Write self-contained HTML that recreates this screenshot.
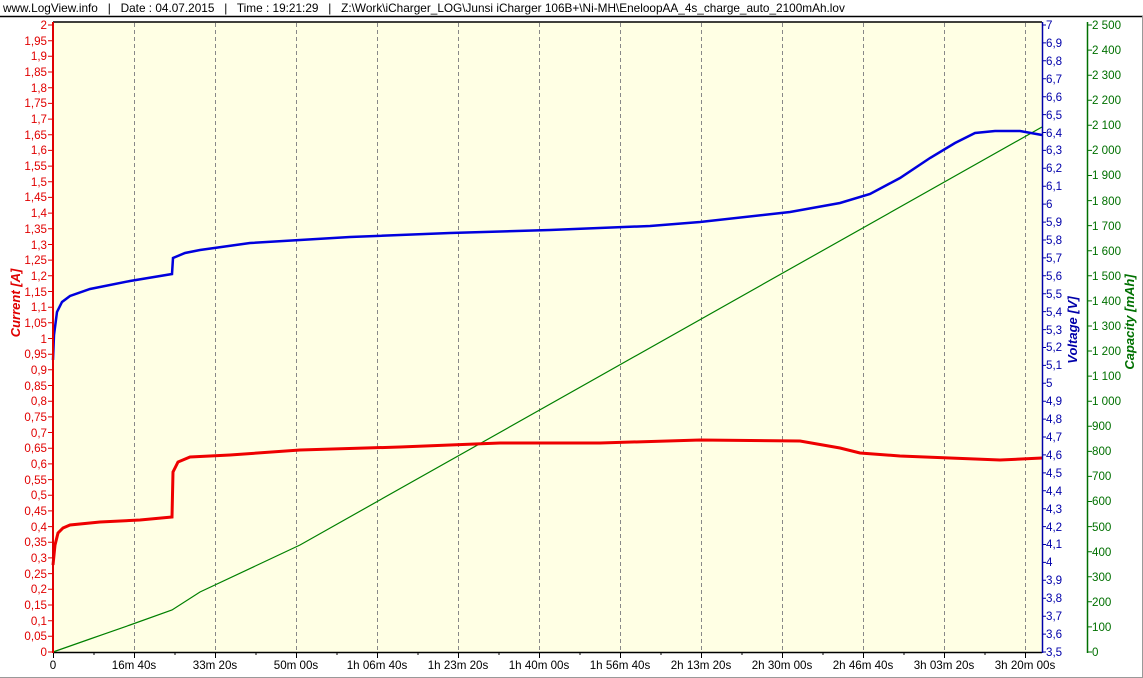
<!DOCTYPE html>
<html><head><meta charset="utf-8"><style>
html,body{margin:0;padding:0;background:#fff;width:1143px;height:678px;overflow:hidden}
svg{display:block;font-family:"Liberation Sans",sans-serif;font-size:11.6px}
</style></head><body>
<svg width="1143" height="678" viewBox="0 0 1143 678">
<rect x="0" y="0" width="1143" height="678" fill="#fff"/>
<text x="3" y="12" font-size="11.8" fill="#000" xml:space="preserve">www.LogView.info   |   Date : 04.07.2015   |   Time : 19:21:29   |   Z:\Work\iCharger_LOG\Junsi iCharger 106B+\Ni-MH\EneloopAA_4s_charge_auto_2100mAh.lov</text>
<line x1="0" y1="16.5" x2="1143" y2="16.5" stroke="#000" stroke-width="1.5"/>
<line x1="0" y1="677.5" x2="1143" y2="677.5" stroke="#999" stroke-width="1"/>
<line x1="1142.5" y1="16" x2="1142.5" y2="678" stroke="#999" stroke-width="1"/>
<rect x="53" y="22" width="989" height="630" fill="#ffffe4"/>
<line x1="53" y1="22" x2="1042" y2="22" stroke="#000" stroke-width="1.5"/>
<g stroke="#888" stroke-dasharray="4,3" stroke-width="1">
<line x1="134.5" y1="23" x2="134.5" y2="651"/><line x1="215.5" y1="23" x2="215.5" y2="651"/><line x1="296.5" y1="23" x2="296.5" y2="651"/><line x1="377.5" y1="23" x2="377.5" y2="651"/><line x1="458.5" y1="23" x2="458.5" y2="651"/><line x1="539.5" y1="23" x2="539.5" y2="651"/><line x1="620.5" y1="23" x2="620.5" y2="651"/><line x1="701.5" y1="23" x2="701.5" y2="651"/><line x1="782.5" y1="23" x2="782.5" y2="651"/><line x1="863.5" y1="23" x2="863.5" y2="651"/><line x1="944.5" y1="23" x2="944.5" y2="651"/><line x1="1025.5" y1="23" x2="1025.5" y2="651"/>
</g>
<line x1="53" y1="652.5" x2="1042" y2="652.5" stroke="#000" stroke-width="1.5"/>
<g stroke="#000"><line x1="53.5" y1="652" x2="53.5" y2="658"/><line x1="134.5" y1="652" x2="134.5" y2="658"/><line x1="215.5" y1="652" x2="215.5" y2="658"/><line x1="296.5" y1="652" x2="296.5" y2="658"/><line x1="377.5" y1="652" x2="377.5" y2="658"/><line x1="458.5" y1="652" x2="458.5" y2="658"/><line x1="539.5" y1="652" x2="539.5" y2="658"/><line x1="620.5" y1="652" x2="620.5" y2="658"/><line x1="701.5" y1="652" x2="701.5" y2="658"/><line x1="782.5" y1="652" x2="782.5" y2="658"/><line x1="863.5" y1="652" x2="863.5" y2="658"/><line x1="944.5" y1="652" x2="944.5" y2="658"/><line x1="1025.5" y1="652" x2="1025.5" y2="658"/></g>
<g stroke="#000"><path d="M94 652v3M175 652v3M256 652v3M337 652v3M418 652v3M499 652v3M580 652v3M661 652v3M742 652v3M823 652v3M904 652v3M985 652v3"/></g>
<!-- curves -->
<polyline fill="none" stroke="#008000" stroke-width="1.2" points="53,652 90,639 130,625 172,610 200,592 300,545 1042,127"/>
<polyline fill="none" stroke="#ee0000" stroke-width="3" points="53,565 55,545 58,533 63,528 70,525 100,522 140,520 172,517 173,472 178,462 190,457 230,455 300,450 400,447 500,443 600,443 700,440 800,441 840,448 860,453 900,456 1000,460 1042,458"/>
<polyline fill="none" stroke="#0000dd" stroke-width="2.5" points="53,360 54,335 57,312 62,302 70,296 90,289 130,281 172,274 173,258 185,253 200,250 250,243 300,240 350,237 450,233 550,230 650,226 700,222 790,212 840,203 870,194 900,178 930,158 955,143 975,133 995,131 1020,131 1042,135"/>
<!-- axes -->
<line x1="53" y1="22" x2="53" y2="653" stroke="#e00000" stroke-width="2"/>
<line x1="1042.5" y1="22" x2="1042.5" y2="653" stroke="#0000aa" stroke-width="1.5"/>
<line x1="1087.5" y1="22" x2="1087.5" y2="653" stroke="#007000" stroke-width="1.5"/>
<path stroke="#e00000" d="M53 652h-5M53 636.3h-5M53 620.7h-5M53 605h-5M53 589.3h-5M53 573.6h-5M53 557.9h-5M53 542.3h-5M53 526.6h-5M53 510.9h-5M53 495.3h-5M53 479.6h-5M53 463.9h-5M53 448.2h-5M53 432.5h-5M53 416.9h-5M53 401.2h-5M53 385.5h-5M53 369.8h-5M53 354.2h-5M53 338.5h-5M53 322.8h-5M53 307.2h-5M53 291.5h-5M53 275.8h-5M53 260.1h-5M53 244.5h-5M53 228.8h-5M53 213.1h-5M53 197.4h-5M53 181.8h-5M53 166.1h-5M53 150.4h-5M53 134.7h-5M53 119.1h-5M53 103.4h-5M53 87.7h-5M53 72h-5M53 56.3h-5M53 40.7h-5M53 25h-5"/>
<path stroke="#0000aa" d="M1042 652h4M1042 634.1h4M1042 616.2h4M1042 598.3h4M1042 580.3h4M1042 562.4h4M1042 544.5h4M1042 526.6h4M1042 508.7h4M1042 490.8h4M1042 472.9h4M1042 454.9h4M1042 437h4M1042 419.1h4M1042 401.2h4M1042 383.3h4M1042 365.4h4M1042 347.5h4M1042 329.6h4M1042 311.6h4M1042 293.7h4M1042 275.8h4M1042 257.9h4M1042 240h4M1042 222.1h4M1042 204.1h4M1042 186.2h4M1042 168.3h4M1042 150.4h4M1042 132.5h4M1042 114.6h4M1042 96.7h4M1042 78.7h4M1042 60.8h4M1042 42.9h4M1042 25h4"/>
<path stroke="#007000" d="M1087 652h5M1087 626.9h5M1087 601.8h5M1087 576.8h5M1087 551.7h5M1087 526.6h5M1087 501.5h5M1087 476.4h5M1087 451.4h5M1087 426.3h5M1087 401.2h5M1087 376.1h5M1087 351h5M1087 326h5M1087 300.9h5M1087 275.8h5M1087 250.7h5M1087 225.6h5M1087 200.6h5M1087 175.5h5M1087 150.4h5M1087 125.3h5M1087 100.2h5M1087 75.2h5M1087 50.1h5M1087 25h5"/>
<g fill="#e00000" text-anchor="end">
<text x="47" y="656">0</text><text x="47" y="640">0,05</text><text x="47" y="625">0,1</text><text x="47" y="609">0,15</text><text x="47" y="593">0,2</text><text x="47" y="578">0,25</text><text x="47" y="562">0,3</text><text x="47" y="546">0,35</text><text x="47" y="531">0,4</text><text x="47" y="515">0,45</text><text x="47" y="499">0,5</text><text x="47" y="484">0,55</text><text x="47" y="468">0,6</text><text x="47" y="452">0,65</text><text x="47" y="437">0,7</text><text x="47" y="421">0,75</text><text x="47" y="405">0,8</text><text x="47" y="390">0,85</text><text x="47" y="374">0,9</text><text x="47" y="358">0,95</text><text x="47" y="343">1</text><text x="47" y="327">1,05</text><text x="47" y="311">1,1</text><text x="47" y="296">1,15</text><text x="47" y="280">1,2</text><text x="47" y="264">1,25</text><text x="47" y="249">1,3</text><text x="47" y="233">1,35</text><text x="47" y="217">1,4</text><text x="47" y="201">1,45</text><text x="47" y="186">1,5</text><text x="47" y="170">1,55</text><text x="47" y="154">1,6</text><text x="47" y="139">1,65</text><text x="47" y="123">1,7</text><text x="47" y="107">1,75</text><text x="47" y="92">1,8</text><text x="47" y="76">1,85</text><text x="47" y="60">1,9</text><text x="47" y="45">1,95</text><text x="47" y="29">2</text>
</g>
<g fill="#0000aa">
<text x="1046" y="656">3,5</text><text x="1046" y="638">3,6</text><text x="1046" y="620">3,7</text><text x="1046" y="602">3,8</text><text x="1046" y="584">3,9</text><text x="1046" y="566">4</text><text x="1046" y="548">4,1</text><text x="1046" y="531">4,2</text><text x="1046" y="513">4,3</text><text x="1046" y="495">4,4</text><text x="1046" y="477">4,5</text><text x="1046" y="459">4,6</text><text x="1046" y="441">4,7</text><text x="1046" y="423">4,8</text><text x="1046" y="405">4,9</text><text x="1046" y="387">5</text><text x="1046" y="369">5,1</text><text x="1046" y="351">5,2</text><text x="1046" y="334">5,3</text><text x="1046" y="316">5,4</text><text x="1046" y="298">5,5</text><text x="1046" y="280">5,6</text><text x="1046" y="262">5,7</text><text x="1046" y="244">5,8</text><text x="1046" y="226">5,9</text><text x="1046" y="208">6</text><text x="1046" y="190">6,1</text><text x="1046" y="172">6,2</text><text x="1046" y="154">6,3</text><text x="1046" y="137">6,4</text><text x="1046" y="119">6,5</text><text x="1046" y="101">6,6</text><text x="1046" y="83">6,7</text><text x="1046" y="65">6,8</text><text x="1046" y="47">6,9</text><text x="1046" y="29">7</text>
</g>
<g fill="#007000">
<text x="1092" y="656">0</text><text x="1092" y="631">100</text><text x="1092" y="606">200</text><text x="1092" y="581">300</text><text x="1092" y="556">400</text><text x="1092" y="531">500</text><text x="1092" y="505">600</text><text x="1092" y="480">700</text><text x="1092" y="455">800</text><text x="1092" y="430">900</text><text x="1092" y="405">1 000</text><text x="1092" y="380">1 100</text><text x="1092" y="355">1 200</text><text x="1092" y="330">1 300</text><text x="1092" y="305">1 400</text><text x="1092" y="280">1 500</text><text x="1092" y="255">1 600</text><text x="1092" y="230">1 700</text><text x="1092" y="205">1 800</text><text x="1092" y="179">1 900</text><text x="1092" y="154">2 000</text><text x="1092" y="129">2 100</text><text x="1092" y="104">2 200</text><text x="1092" y="79">2 300</text><text x="1092" y="54">2 400</text><text x="1092" y="29">2 500</text>
</g>
<g fill="#000" text-anchor="middle">
<text x="53" y="669">0</text><text x="134" y="669">16m 40s</text><text x="215" y="669">33m 20s</text><text x="296" y="669">50m 00s</text><text x="377" y="669">1h 06m 40s</text><text x="458" y="669">1h 23m 20s</text><text x="539" y="669">1h 40m 00s</text><text x="620" y="669">1h 56m 40s</text><text x="701" y="669">2h 13m 20s</text><text x="782" y="669">2h 30m 00s</text><text x="863" y="669">2h 46m 40s</text><text x="944" y="669">3h 03m 20s</text><text x="1025" y="669">3h 20m 00s</text>
</g>
<text transform="translate(20,303) rotate(-90)" text-anchor="middle" font-size="13" font-weight="bold" font-style="italic" fill="#e00000">Current [A]</text>
<text transform="translate(1077,330) rotate(-90)" text-anchor="middle" font-size="13" font-weight="bold" font-style="italic" fill="#0000aa">Voltage [V]</text>
<text transform="translate(1134,322) rotate(-90)" text-anchor="middle" font-size="13" font-weight="bold" font-style="italic" fill="#007000">Capacity [mAh]</text>
</svg>
</body></html>
